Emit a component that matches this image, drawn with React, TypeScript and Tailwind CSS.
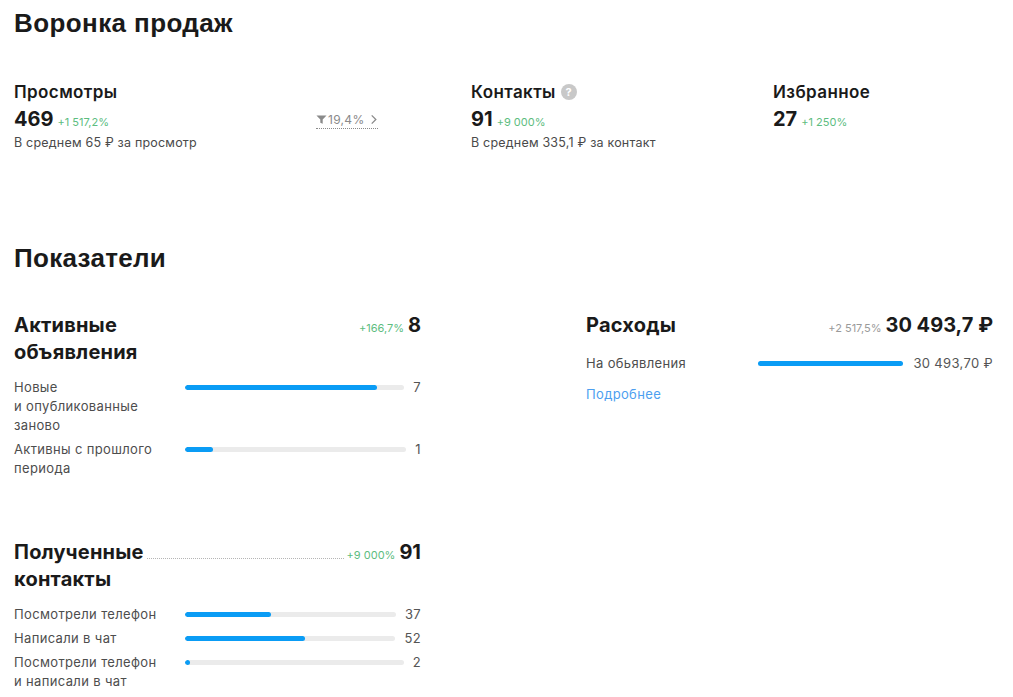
import { FC, ReactNode } from 'react';

const green = 'text-[#5dbd7f]';

type Row = { label: ReactNode; value: string; share: number };

const FunnelIcon: FC = () => (
  <svg viewBox="0 0 12 12" className="size-[11px]" fill="#8a8a8a">
    <path d="M0.5 1.5h11l-4.2 4.6v4.6l-2.6 -1.2v-3.4z" />
  </svg>
);

const Chevron: FC = () => (
  <svg viewBox="0 0 8 12" className="h-[11px] w-[8px]" fill="none" stroke="#8a8a8a" strokeWidth="1.4">
    <path d="M1.5 1.5l4.5 4.5-4.5 4.5" />
  </svg>
);

const Help: FC = () => (
  <span className="ml-[5px] inline-flex size-[16px] items-center justify-center rounded-full bg-[#c8c8c8] text-[11px] font-bold leading-none text-white">
    ?
  </span>
);

const Stat: FC<{ title: ReactNode; value: string; diff: string; note?: ReactNode; last?: boolean }> = ({
  title,
  value,
  diff,
  note,
  last,
}) => (
  <div className={last ? 'min-w-0 flex-1' : 'w-[302px] shrink-0'}>
    <div className="flex items-center text-[17px] font-semibold leading-[24px] tracking-[0.4px] text-[#1a1a1a]">
      {title}
    </div>
    <div className="mt-[2px] flex items-baseline gap-[4px]">
      <span className="text-[20px] font-bold leading-[26px] text-[#1a1a1a]">{value}</span>
      <span className={`text-[11px] ${green}`}>{diff}</span>
    </div>
    {note && (
      <div className="mt-[3px] text-[12.5px] leading-[16px] tracking-[0.2px] text-[#4a4a4a]">{note}</div>
    )}
  </div>
);

const Bars: FC<{ rows: Row[] }> = ({ rows }) => (
  <div className="mt-[12px] flex flex-col gap-[5px]">
    {rows.map((row, i) => (
      <div key={i} className="flex items-start text-[13px] leading-[19px] tracking-[0.35px]">
        <div className="w-[171px] shrink-0 text-[#4d4d4d]">{row.label}</div>
        <div className="flex h-[19px] flex-1 items-center">
          <div className="h-[5px] w-full overflow-hidden rounded-full bg-[#ebebeb]">
            <div className="h-full rounded-full bg-[#0a9cf5]" style={{ width: `${row.share * 100}%` }} />
          </div>
        </div>
        <div className="ml-[9px] shrink-0 text-right text-[#555]">{row.value}</div>
      </div>
    ))}
  </div>
);

const Block: FC<{
  title: ReactNode;
  diff: string;
  diffClass: string;
  value: string;
  leader?: boolean;
  children: ReactNode;
}> = ({ title, diff, diffClass, value, leader, children }) => (
  <div className="w-[407px]">
    <div className="flex items-start">
      <div className="shrink-0 text-[20px] font-bold leading-[27px] tracking-[0.2px] text-[#1a1a1a]">{title}</div>
      <div className="mx-[3px] h-[20px] flex-1">
        {leader && <div className="h-full border-b border-dotted border-[#b5b5b5]" />}
      </div>
      <div className="flex shrink-0 items-baseline gap-[4px] leading-[27px]">
        <span className={`text-[11px] ${diffClass}`}>{diff}</span>
        <span className="text-[20px] font-bold text-[#1a1a1a]">{value}</span>
      </div>
    </div>
    {children}
  </div>
);

export default function App() {
  return (
    <div className="min-h-[697px] w-full bg-white px-[14px] pt-[6px] font-['Inter',sans-serif]">
      <h2 className="font-['Liberation_Sans',sans-serif] text-[26px] font-bold leading-[34px] tracking-[0.4px] text-[#1a1a1a]">
        Воронка продаж
      </h2>

      <div className="mt-[40px] flex">
        <Stat title="Просмотры" value="469" diff="+1 517,2%" note="В среднем 65 ₽ за просмотр" />
        <div className="w-[155px] shrink-0 pt-[27px]">
          <span className="inline-flex items-center gap-[1px] border-b border-dotted border-[#8a8a8a] pb-[1px] text-[12px] leading-[14px] tracking-[0.3px] text-[#8a8a8a]">
            <FunnelIcon />
            19,4%
            <span className="ml-[4px]">
              <Chevron />
            </span>
          </span>
        </div>
        <Stat
          title={
            <>
              Контакты
              <Help />
            </>
          }
          value="91"
          diff="+9 000%"
          note="В среднем 335,1 ₽ за контакт"
        />
        <Stat title="Избранное" value="27" diff="+1 250%" last />
      </div>

      <h2 className="mt-[90px] font-['Liberation_Sans',sans-serif] text-[26px] font-bold leading-[34px] tracking-[0.3px] text-[#1a1a1a]">
        Показатели
      </h2>

      <div className="mt-[37px] flex gap-[165px]">
        <div className="flex flex-col gap-[61px]">
          <Block title={<>Активные<br />объявления</>} diff="+166,7%" diffClass={green} value="8">
            <Bars
              rows={[
                { label: <>Новые<br />и опубликованные<br />заново</>, value: '7', share: 7 / 8 },
                { label: <>Активны с прошлого<br />периода</>, value: '1', share: 1 / 8 },
              ]}
            />
          </Block>
          <Block title={<>Полученные<br />контакты</>} diff="+9 000%" diffClass={green} value="91" leader>
            <Bars
              rows={[
                { label: 'Посмотрели телефон', value: '37', share: 37 / 91 },
                { label: 'Написали в чат', value: '52', share: 52 / 91 },
                { label: <>Посмотрели телефон<br />и написали в чат</>, value: '2', share: 2 / 91 },
              ]}
            />
          </Block>
        </div>

        <div className="w-[407px]">
          <div className="flex items-baseline justify-between leading-[27px]">
            <span className="text-[20px] font-bold tracking-[0.2px] text-[#1a1a1a]">Расходы</span>
            <span className="flex items-baseline gap-[4px]">
              <span className="text-[11px] text-[#9a9a9a]">+2 517,5%</span>
              <span className="text-[20px] font-bold text-[#1a1a1a]">30 493,7 ₽</span>
            </span>
          </div>
          <div className="mt-[12px] flex items-start text-[13px] leading-[19px] tracking-[0.35px]">
            <div className="w-[172px] shrink-0 text-[#4d4d4d]">На обьявления</div>
            <div className="flex h-[19px] flex-1 items-center">
              <div className="h-[5px] w-full rounded-full bg-[#0a9cf5]" />
            </div>
            <div className="ml-[10px] shrink-0 text-[#555]">30 493,70 ₽</div>
          </div>
          <div className="mt-[12px] text-[13px] leading-[19px] tracking-[0.35px] text-[#4d9ff0]">Подробнее</div>
        </div>
      </div>
    </div>
  );
}
